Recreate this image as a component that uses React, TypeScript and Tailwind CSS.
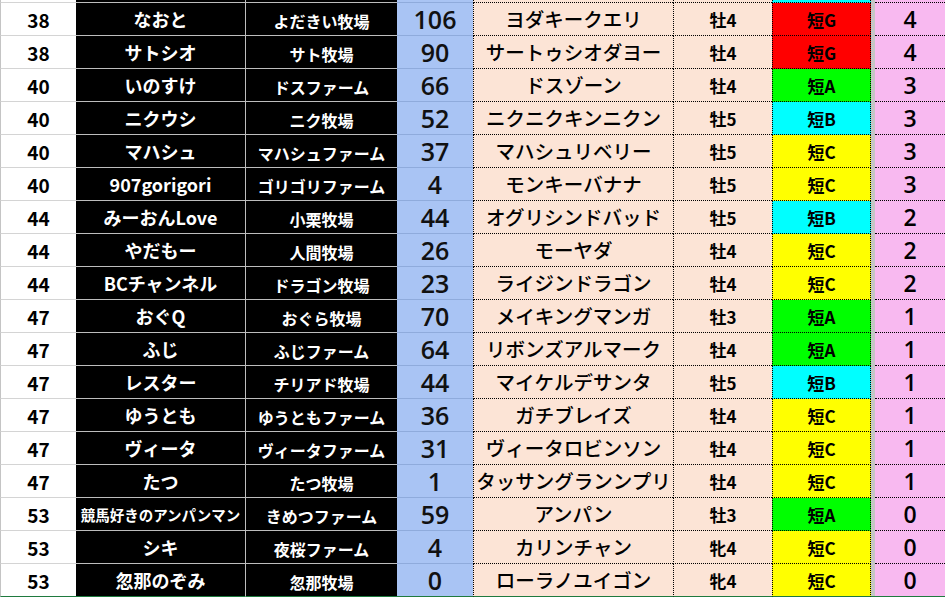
import React from "react";

type Row = {
  rank: string;
  name: string;
  farm: string;
  pts: string;
  horse: string;
  sex: string;
  rating: string;
  color: "red" | "green" | "cyan" | "yellow";
  n: string;
  nameSmall?: boolean;
};

const rows: Row[] = [
  { rank: "38", name: "なおと", farm: "よだきい牧場", pts: "106", horse: "ヨダキークエリ", sex: "牡4", rating: "短G", color: "red", n: "4" },
  { rank: "38", name: "サトシオ", farm: "サト牧場", pts: "90", horse: "サートゥシオダヨー", sex: "牡4", rating: "短G", color: "red", n: "4" },
  { rank: "40", name: "いのすけ", farm: "ドスファーム", pts: "66", horse: "ドスゾーン", sex: "牡4", rating: "短A", color: "green", n: "3" },
  { rank: "40", name: "ニクウシ", farm: "ニク牧場", pts: "52", horse: "ニクニクキンニクン", sex: "牡5", rating: "短B", color: "cyan", n: "3" },
  { rank: "40", name: "マハシュ", farm: "マハシュファーム", pts: "37", horse: "マハシュリベリー", sex: "牡5", rating: "短C", color: "yellow", n: "3" },
  { rank: "40", name: "907gorigori", farm: "ゴリゴリファーム", pts: "4", horse: "モンキーバナナ", sex: "牡5", rating: "短C", color: "yellow", n: "3" },
  { rank: "44", name: "みーおんLove", farm: "小栗牧場", pts: "44", horse: "オグリシンドバッド", sex: "牡5", rating: "短B", color: "cyan", n: "2" },
  { rank: "44", name: "やだもー", farm: "人間牧場", pts: "26", horse: "モーヤダ", sex: "牡4", rating: "短C", color: "yellow", n: "2" },
  { rank: "44", name: "BCチャンネル", farm: "ドラゴン牧場", pts: "23", horse: "ライジンドラゴン", sex: "牡4", rating: "短C", color: "yellow", n: "2" },
  { rank: "47", name: "おぐQ", farm: "おぐら牧場", pts: "70", horse: "メイキングマンガ", sex: "牡3", rating: "短A", color: "green", n: "1" },
  { rank: "47", name: "ふじ", farm: "ふじファーム", pts: "64", horse: "リボンズアルマーク", sex: "牡4", rating: "短A", color: "green", n: "1" },
  { rank: "47", name: "レスター", farm: "チリアド牧場", pts: "44", horse: "マイケルデサンタ", sex: "牡5", rating: "短B", color: "cyan", n: "1" },
  { rank: "47", name: "ゆうとも", farm: "ゆうともファーム", pts: "36", horse: "ガチブレイズ", sex: "牡4", rating: "短C", color: "yellow", n: "1" },
  { rank: "47", name: "ヴィータ", farm: "ヴィータファーム", pts: "31", horse: "ヴィータロビンソン", sex: "牡4", rating: "短C", color: "yellow", n: "1" },
  { rank: "47", name: "たつ", farm: "たつ牧場", pts: "1", horse: "タッサングランンプリ", sex: "牡4", rating: "短C", color: "yellow", n: "1" },
  { rank: "53", name: "競馬好きのアンパンマン", farm: "きめつファーム", pts: "59", horse: "アンパン", sex: "牡3", rating: "短A", color: "green", n: "0", nameSmall: true },
  { rank: "53", name: "シキ", farm: "夜桜ファーム", pts: "4", horse: "カリンチャン", sex: "牝4", rating: "短C", color: "yellow", n: "0" },
  { rank: "53", name: "忽那のぞみ", farm: "忽那牧場", pts: "0", horse: "ローラノユイゴン", sex: "牝4", rating: "短C", color: "yellow", n: "0" },
];

const ratingBg: Record<Row["color"], string> = {
  red: "bg-[#ff0000]",
  green: "bg-[#00ff00]",
  cyan: "bg-[#00ffff]",
  yellow: "bg-[#ffff00]",
};

const jp = "font-['Noto_Sans_CJK_JP','Noto_Sans',sans-serif]";
const num = "font-['Open_Sans','Noto_Sans',sans-serif]";

const grid =
  "grid grid-cols-[76px_170px_151px_76px_200px_99px_99px_4px_70px]";

const dotL = "border-l border-l-black [border-left-style:dotted]";
const dotR = "border-r border-r-black [border-right-style:dotted]";

function DataRow({ r, last }: { r: Row; last: boolean }) {
  const cellBase =
    "h-[33px] flex items-center justify-center leading-none whitespace-nowrap overflow-visible border-b";
  const green = "border-b-[#1f7a3f]";
  const gray = last ? green : "border-b-[#d4d4d4]";
  const blk = last ? green : "border-b-[#bdbdbd]";
  const blu = last ? green : "border-b-[#8fabdc]";
  const dot = last ? green : "border-b-black [border-bottom-style:dotted]";
  return (
    <div className={grid}>
      <div className={`${cellBase} ${gray} bg-white border-l border-l-[#c4c4c4] text-black font-bold text-[19px] ${jp}`}>
        {r.rank}
      </div>
      <div
        className={`${cellBase} ${blk} bg-black border-r border-r-[#bdbdbd] text-white font-bold ${jp} ${
          r.nameSmall ? "text-[14.5px] pt-[2px]" : "text-[18px]"
        }`}
      >
        {r.name}
      </div>
      <div className={`${cellBase} ${blk} bg-black text-white font-bold text-[16px] pt-[3px] ${jp}`}>
        {r.farm}
      </div>
      <div className={`${cellBase} ${blu} bg-[#a9c4f4] text-[#111] text-[25px] font-semibold pt-[1px] ${num}`}>
        {r.pts}
      </div>
      <div className={`${cellBase} ${dot} bg-[#fce4d6] ${dotL} text-black font-medium text-[19.5px] ${jp}`}>
        {r.horse}
      </div>
      <div className={`${cellBase} ${dot} bg-[#fce4d6] ${dotL} text-black font-bold text-[17px] pt-[1px] ${jp}`}>
        {r.sex}
      </div>
      <div className={`${cellBase} ${dot} ${ratingBg[r.color]} ${dotL} ${dotR} text-black font-bold text-[17px] pt-[1px] ${jp}`}>
        {r.rating}
      </div>
      <div className={`h-[33px] bg-[#c6c6c6] ${last ? "border-b border-b-[#1f7a3f]" : ""}`} />
      <div className={`${cellBase} ${dot} bg-[#f8b9f0] text-black text-[23px] font-semibold ${num}`}>
        {r.n}
      </div>
    </div>
  );
}

function TopStrip() {
  const c = "h-[3px] border-b";
  const d = "border-b-black [border-bottom-style:dotted]";
  return (
    <div className={grid}>
      <div className={`${c} bg-white border-l border-l-[#c4c4c4] border-b-[#d4d4d4]`} />
      <div className={`${c} bg-black border-r border-r-[#bdbdbd] border-b-[#bdbdbd]`} />
      <div className={`${c} bg-black border-b-[#bdbdbd]`} />
      <div className={`${c} bg-[#a9c4f4] border-b-[#8fabdc]`} />
      <div className={`${c} bg-[#fce4d6] ${dotL} ${d}`} />
      <div className={`${c} bg-[#fce4d6] ${dotL} ${d}`} />
      <div className={`${c} bg-[#00ffff] ${dotL} ${dotR} ${d}`} />
      <div className="h-[3px] bg-[#c6c6c6]" />
      <div className={`${c} bg-[#f8b9f0] ${d}`} />
    </div>
  );
}

export default function App() {
  return (
    <div className="w-[945px] h-[597px] overflow-hidden bg-white">
      <TopStrip />
      {rows.map((r, i) => (
        <DataRow key={i} r={r} last={i === rows.length - 1} />
      ))}
    </div>
  );
}
